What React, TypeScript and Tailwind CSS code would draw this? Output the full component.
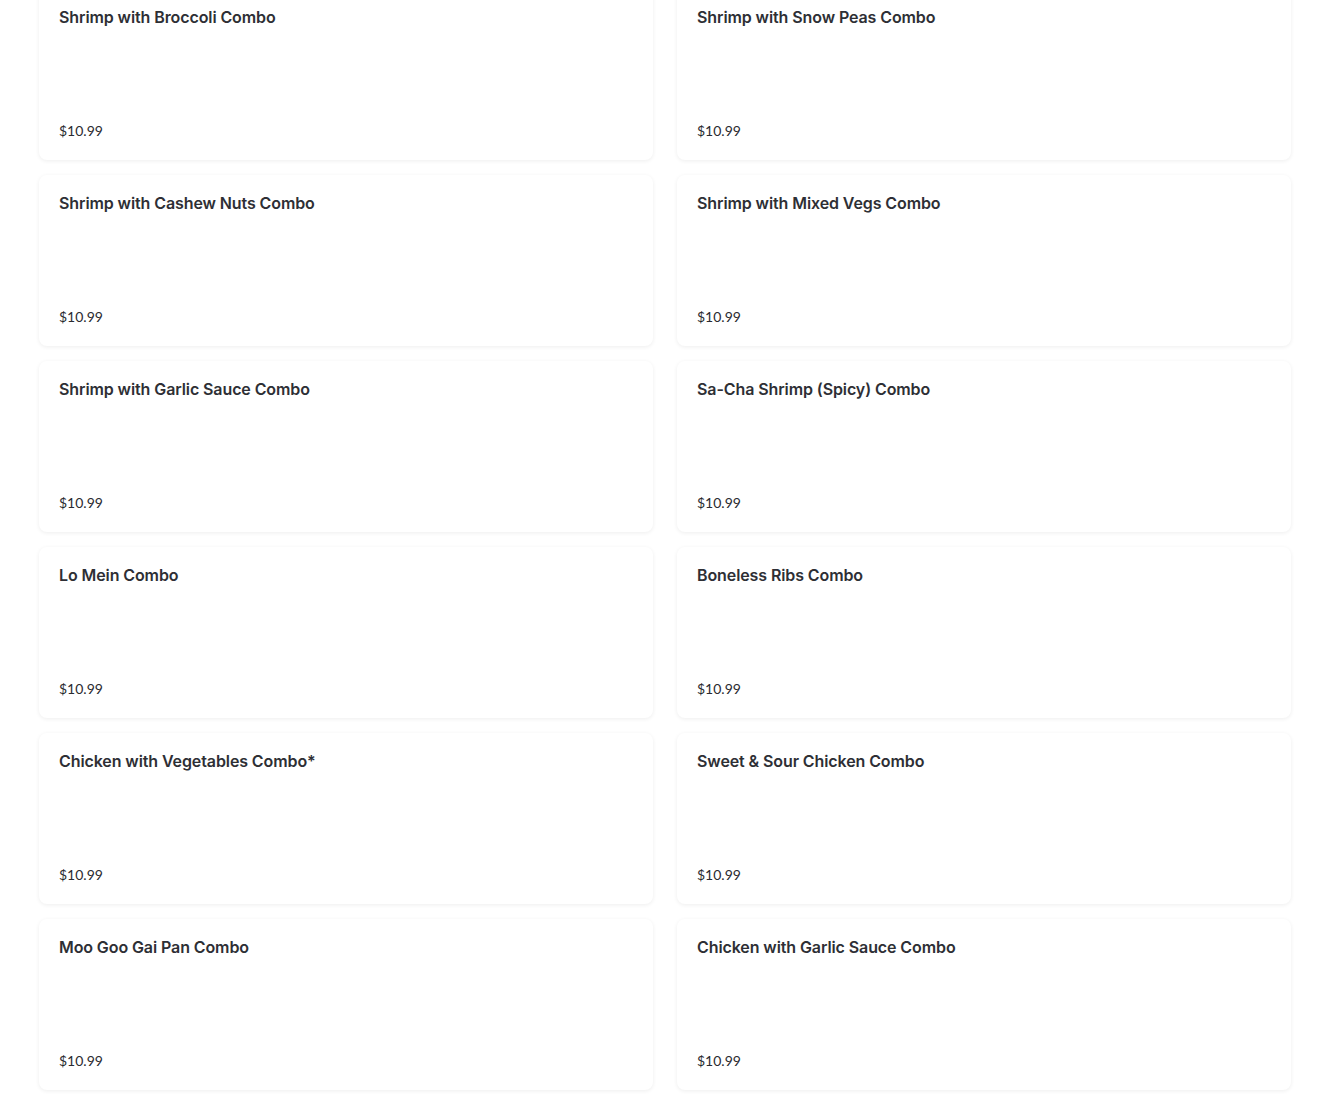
import React from 'react';

const items: [string, string][] = [
  ['Shrimp with Broccoli Combo', 'Shrimp with Snow Peas Combo'],
  ['Shrimp with Cashew Nuts Combo', 'Shrimp with Mixed Vegs Combo'],
  ['Shrimp with Garlic Sauce Combo', 'Sa-Cha Shrimp (Spicy) Combo'],
  ['Lo Mein Combo', 'Boneless Ribs Combo'],
  ['Chicken with Vegetables Combo*', 'Sweet & Sour Chicken Combo'],
  ['Moo Goo Gai Pan Combo', 'Chicken with Garlic Sauce Combo'],
];

const Card: React.FC<{ name: string }> = ({ name }) => (
  <div className="h-[171px] rounded-lg bg-white px-5 pt-[16px] pb-[19px] flex flex-col justify-between shadow-[0_1px_4px_rgba(0,0,0,0.07)]">
    <div className="text-[16px] leading-6 font-semibold text-[#2e2f35] font-['Inter',sans-serif] tracking-[-0.1px]">
      {name}
    </div>
    <div className="text-[14px] leading-5 text-[#2a2b30]">$10.99</div>
  </div>
);

export default function App() {
  return (
    <div
      className="w-[1330px] h-[1101px] overflow-hidden bg-white"
      style={{ fontFamily: 'Lato, "Open Sans", sans-serif' }}
    >
      <div className="-mt-[11px] px-[39px] grid grid-cols-2 gap-x-[24px] gap-y-[15px]">
        {items.flatMap(([a, b]) => [
          <Card key={a} name={a} />,
          <Card key={b} name={b} />,
        ])}
      </div>
    </div>
  );
}
